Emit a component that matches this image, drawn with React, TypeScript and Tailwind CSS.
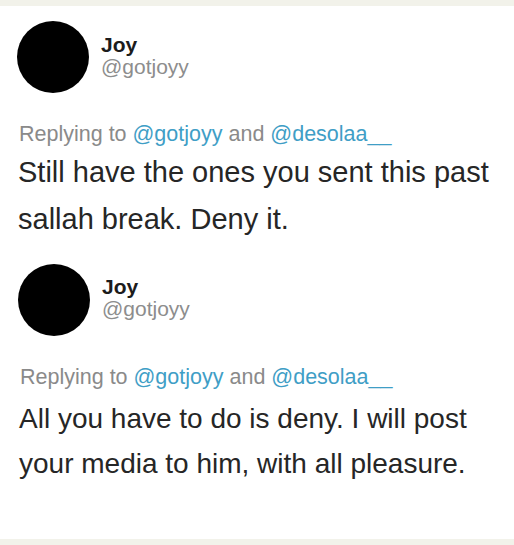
import React from "react";

type TweetProps = {
  nameMt: string;
  replyMt: string;
  bodyMt: string;
  bodyClass: string;
  text: React.ReactNode;
  pl: string;
};

function Tweet({ nameMt, replyMt, bodyMt, bodyClass, text, pl }: TweetProps) {
  return (
    <div className={`flex flex-col ${pl}`}>
      <div className="flex flex-row gap-[12px]">
        <div className="w-[72px] h-[72px] rounded-full bg-black shrink-0" />
        <div className={`flex flex-col ${nameMt}`}>
          <div className="text-[21px] leading-[22px] font-bold text-[#1c1c1c]">Joy</div>
          <div className="text-[21px] leading-[22px] text-[#8d8d8d]">@gotjoyy</div>
        </div>
      </div>
      <div className={`${replyMt} text-[21.5px] leading-[26px] text-[#8a8a8a] pl-[2px]`}>
        Replying to <span className="text-[#3f9ec6]">@gotjoyy</span> and{" "}
        <span className="text-[#3f9ec6]">@desolaa__</span>
      </div>
      <div className={`${bodyMt} ${bodyClass} text-[#262626] pl-[1px]`}>{text}</div>
    </div>
  );
}

export default function App() {
  return (
    <div
      className="w-[514px] h-[545px] bg-[#f2f2ea] pt-[6px] pb-[6px]"
      style={{ fontFamily: '"Liberation Sans", Arial, sans-serif' }}
    >
      <div className="bg-white h-[533px] flex flex-col pt-[15px]">
        <Tweet
          pl="pl-[17px]"
          nameMt="mt-[13px]"
          replyMt="mt-[28px]"
          bodyMt="mt-[2px]"
          bodyClass="text-[29px] leading-[47px]"
          text={
            <>
              Still have the ones you sent this past
              <br />
              sallah break. Deny it.
            </>
          }
        />
        <div className="h-[21px]" />
        <Tweet
          pl="pl-[18px]"
          nameMt="mt-[12px]"
          replyMt="mt-[28px]"
          bodyMt="mt-[6px]"
          bodyClass="text-[28px] leading-[45px]"
          text={
            <>
              All you have to do is deny. I will post
              <br />
              your media to him, with all pleasure.
            </>
          }
        />
      </div>
    </div>
  );
}
